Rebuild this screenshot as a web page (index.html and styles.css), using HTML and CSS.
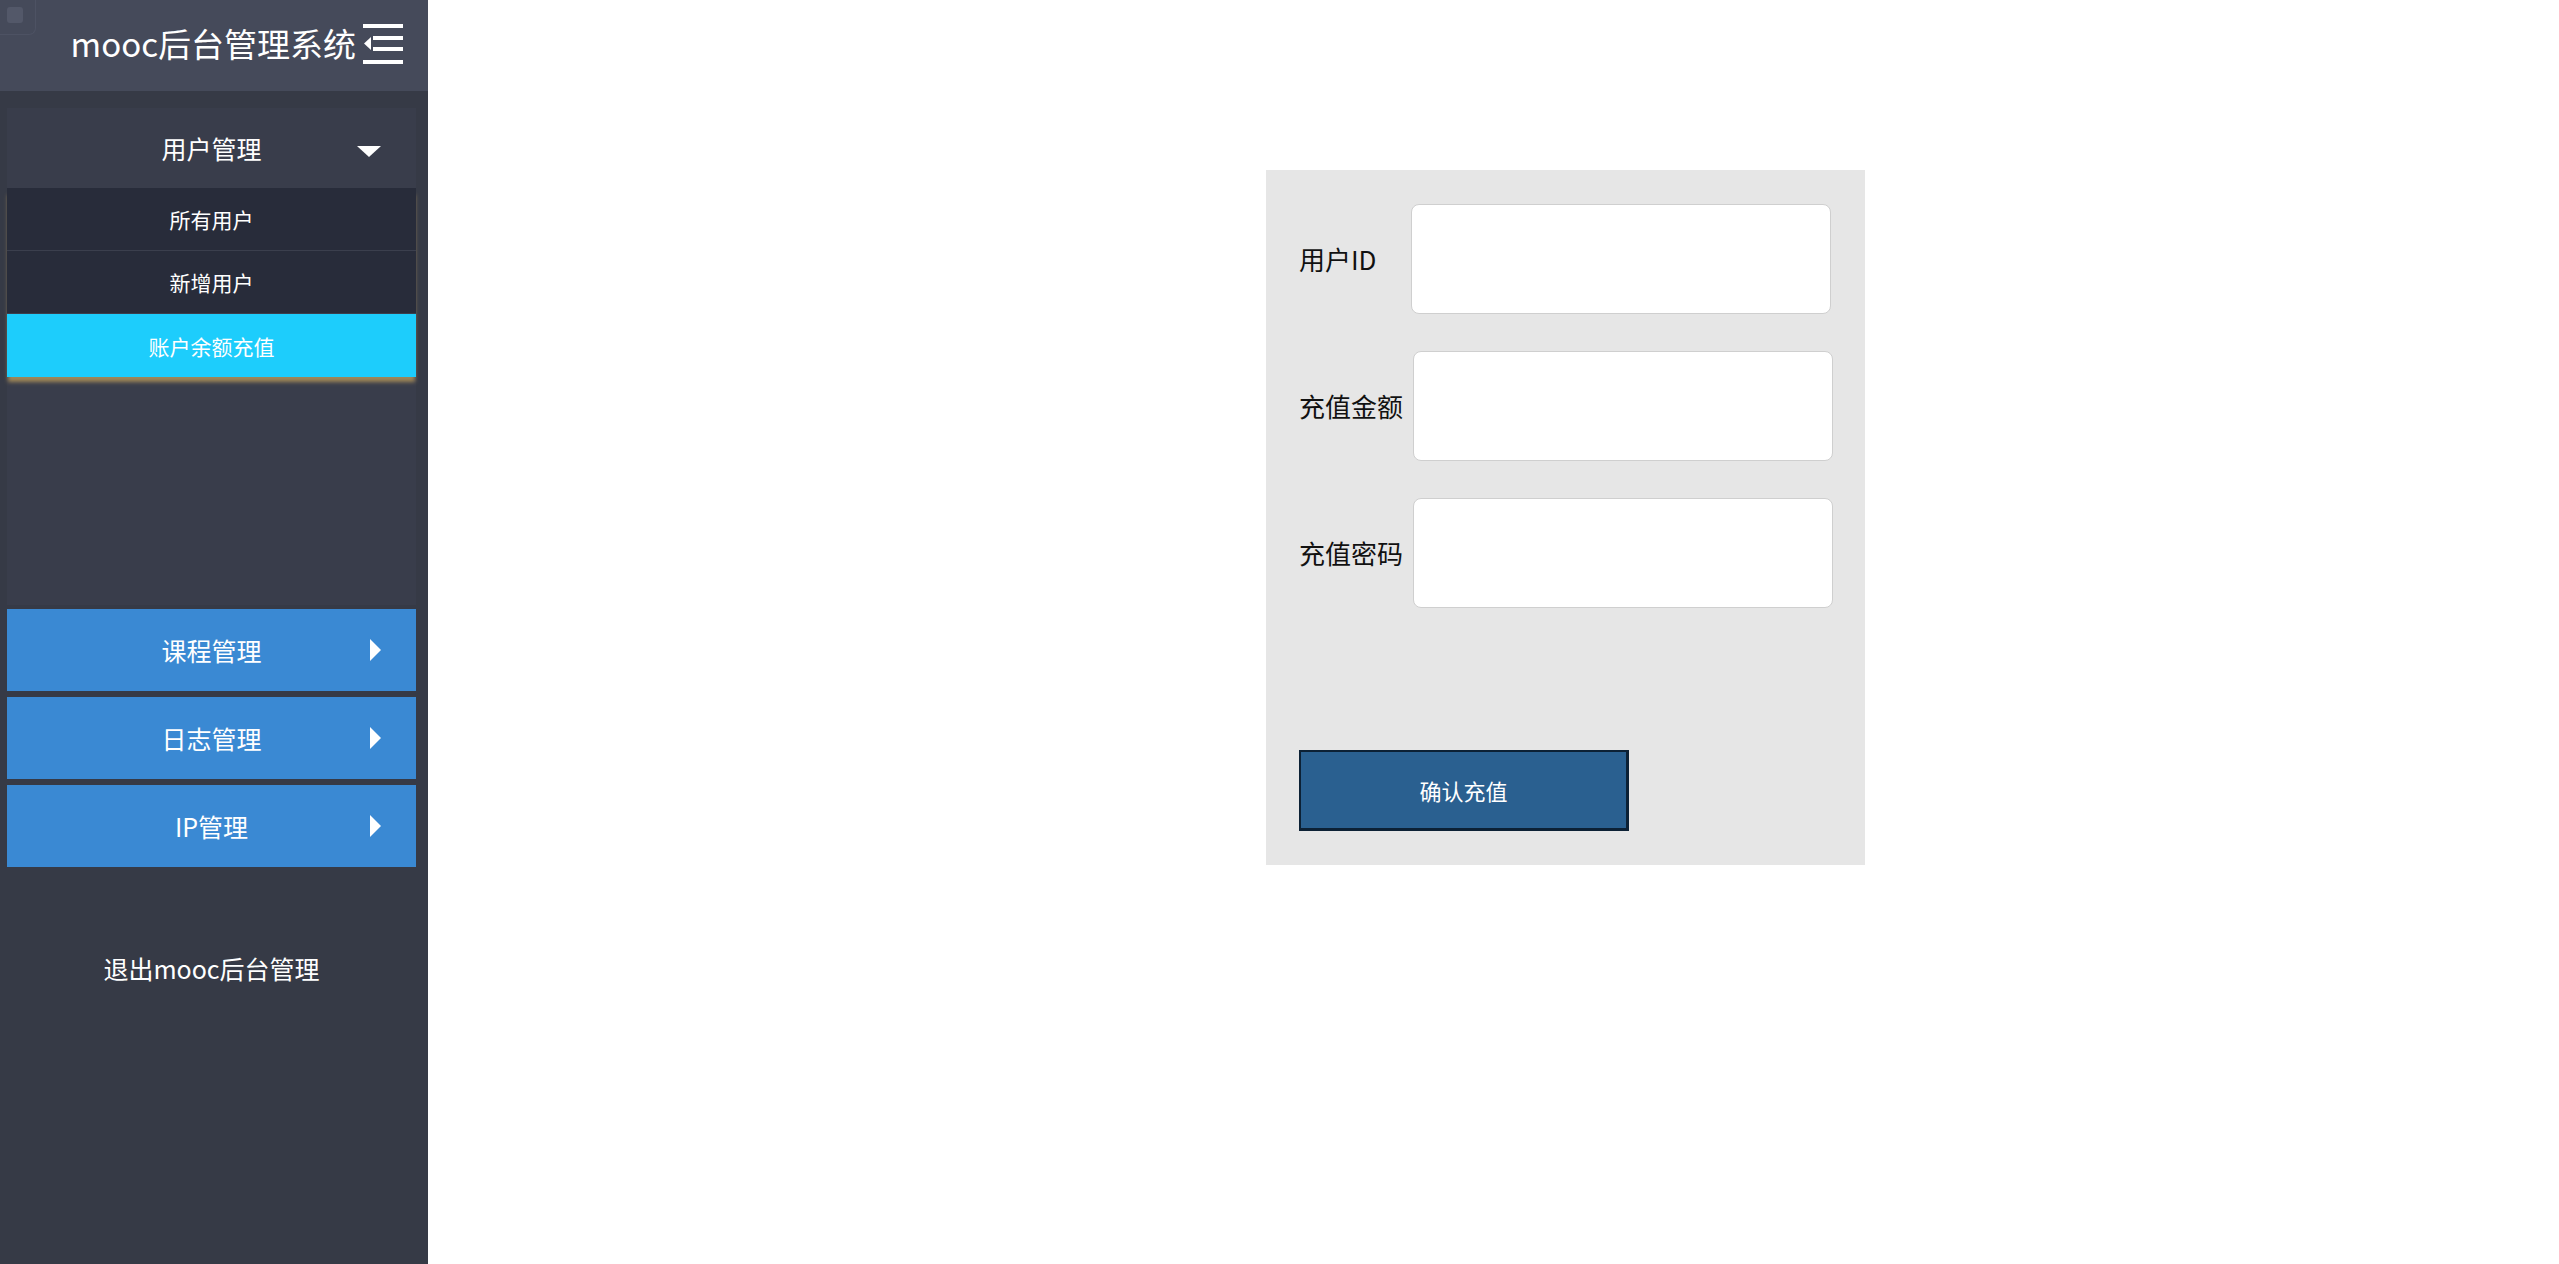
FILE: index.html
```html
<!DOCTYPE html>
<html lang="zh-CN">
<head>
<meta charset="utf-8">
<title>mooc后台管理系统</title>
<link rel="stylesheet" href="styles.css">
</head>
<body>
<div class="app">
  <aside class="sidebar">
    <div class="brand">
      <span class="broken-img"><span class="broken-inner"></span></span>
      <span class="brand-title">mooc后台管理系统</span>
      <svg class="menu-icon" width="40" height="40" viewBox="0 0 40 40">
        <rect x="0" y="0" width="40" height="4" fill="#fff"/>
        <rect x="10" y="12" width="30" height="4" fill="#fff"/>
        <rect x="10" y="23" width="30" height="4" fill="#fff"/>
        <rect x="0" y="36" width="40" height="4" fill="#fff"/>
        <polygon points="1,19.5 8,13 8,26" fill="#fff"/>
      </svg>
    </div>
    <nav class="nav">
      <div class="group open">
        <div class="group-head">
          <span class="group-title">用户管理</span>
          <span class="caret-down"></span>
        </div>
        <ul class="sub">
          <li class="sub-item">所有用户</li>
          <li class="sub-item">新增用户</li>
          <li class="sub-item active">账户余额充值</li>
        </ul>
      </div>
      <div class="item"><span class="group-title">课程管理</span><span class="caret-right"></span></div>
      <div class="item"><span class="group-title">日志管理</span><span class="caret-right"></span></div>
      <div class="item"><span class="group-title">IP管理</span><span class="caret-right"></span></div>
      <div class="logout">退出mooc后台管理</div>
    </nav>
  </aside>
  <main class="main">
    <form class="card">
      <div class="row">
        <label class="label label-id">用户ID</label>
        <input class="field" type="text">
      </div>
      <div class="row">
        <label class="label">充值金额</label>
        <input class="field" type="text">
      </div>
      <div class="row">
        <label class="label">充值密码</label>
        <input class="field" type="password">
      </div>
      <div class="actions">
        <button class="btn" type="button">确认充值</button>
      </div>
    </form>
  </main>
</div>
</body>
</html>
```
FILE: styles.css
```css
* { box-sizing: border-box; }
html, body { margin: 0; padding: 0; height: 100%; }
body {
  font-family: "Noto Sans CJK SC", "Noto Sans", sans-serif;
  background: #fff;
}
.app {
  display: flex;
  height: 1264px;
}
.sidebar {
  width: 428px;
  flex: none;
  background: #363a46;
  display: flex;
  flex-direction: column;
  position: relative;
}
.brand {
  height: 91px;
  background: #454a5a;
  display: flex;
  align-items: center;
  justify-content: flex-end;
  padding-right: 25px;
  gap: 7px;
  position: relative;
}
.broken-img {
  position: absolute;
  left: 0;
  top: 0;
  width: 36px;
  height: 35px;
  border-right: 1px solid #4d5263;
  border-bottom: 1px solid #4d5263;
  border-bottom-right-radius: 7px;
}
.broken-inner {
  position: absolute;
  left: 7px;
  top: 7px;
  width: 16px;
  height: 16px;
  border-radius: 3px;
  background: #535869;
}
.brand-title {
  color: #fff;
  font-size: 33px;
  line-height: 40px;
  margin-top: -6px;
}
.menu-icon { display: block; margin-top: -4px; }
.nav {
  display: flex;
  flex-direction: column;
  padding: 17px 12px 0 7px;
}
.group {
  background: #393d4b;
  height: 497px;
}
.group-head {
  height: 80px;
  display: flex;
  align-items: center;
  justify-content: center;
  position: relative;
}
.group-title {
  color: #fff;
  font-size: 25px;
  line-height: 30px;
}
.caret-down {
  position: absolute;
  right: 35px;
  top: 38px;
  width: 0;
  height: 0;
  border-left: 12px solid transparent;
  border-right: 12px solid transparent;
  border-top: 11px solid #fff;
}
.sub {
  list-style: none;
  margin: 0;
  padding: 0;
  box-shadow: 0 6px 4px -1px #a08858;
}
.sub-item {
  height: 63px;
  display: flex;
  align-items: center;
  justify-content: center;
  background: #282c3a;
  color: #fff;
  font-size: 21px;
  border-bottom: 1px solid #3b3f4d;
}
.sub-item.active {
  background: #1dcdfc;
  border-bottom: none;
}
.item {
  height: 82px;
  margin-top: 6px;
  background: #3a89d3;
  display: flex;
  align-items: center;
  justify-content: center;
  position: relative;
}
.group + .item { margin-top: 4px; }
.caret-right {
  position: absolute;
  right: 35px;
  top: 30px;
  width: 0;
  height: 0;
  border-top: 11px solid transparent;
  border-bottom: 11px solid transparent;
  border-left: 11px solid #fff;
}
.logout {
  color: #fff;
  font-size: 25px;
  line-height: 30px;
  text-align: center;
  margin-top: 86px;
}
.main {
  flex: 1;
}
.card {
  margin: 170px 0 0 838px;
  width: 599px;
  height: 695px;
  background: #e6e6e6;
  padding: 34px 0 34px 33px;
  display: flex;
  flex-direction: column;
}
.row {
  display: flex;
  align-items: center;
  margin-bottom: 37px;
}
.label {
  width: 114px;
  font-size: 26px;
  color: #111;
  line-height: 30px;
}
.label-id { width: 112px; }
.field {
  width: 420px;
  height: 110px;
  border: 1px solid #cfcfcf;
  border-radius: 8px;
  background: #fff;
  outline: none;
  font-size: 24px;
  padding: 0 12px;
}
.actions {
  margin-top: auto;
}
.btn {
  width: 330px;
  height: 81px;
  background: #2a6090;
  border-style: solid;
  border-color: #0c2135;
  border-width: 2px 3px 3px 2px;
  color: #fff;
  font-family: "Noto Sans CJK SC", "Noto Sans", sans-serif;
  font-size: 22px;
  padding: 0;
}
```
